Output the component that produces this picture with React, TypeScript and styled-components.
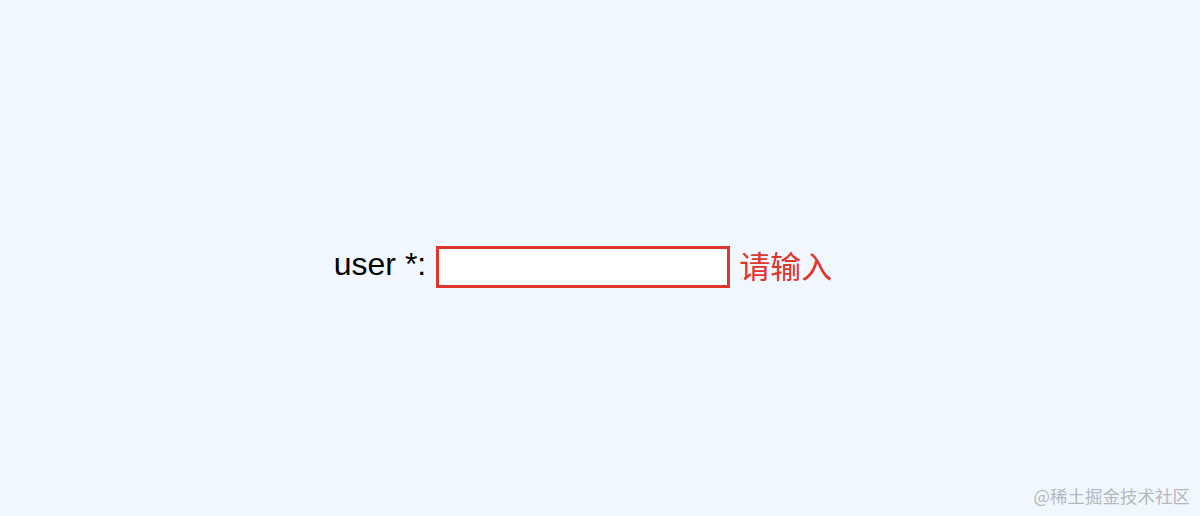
import styled, { createGlobalStyle } from 'styled-components';

const GlobalStyle = createGlobalStyle`
  html, body {
    margin: 0;
    padding: 0;
    background-color: #f1f7fe;
  }
`;

const Page = () => {
  return (
    <>
      <GlobalStyle />
      <Container>
        <FormRow>
          <Label htmlFor="user">user *:</Label>
          <Input id="user" type="text" />
          <ErrorText>请输入</ErrorText>
        </FormRow>
        <Watermark>@稀土掘金技术社区</Watermark>
      </Container>
    </>
  );
};

const Container = styled.div`
  position: relative;
  width: 1200px;
  height: 516px;
  box-sizing: border-box;
  padding: 17px 34px 0 0;
  display: flex;
  justify-content: center;
  align-items: center;
  background-color: #f1f7fe;
  font-family: 'Liberation Sans', 'Noto Sans CJK SC', sans-serif;
`;

const FormRow = styled.div`
  display: flex;
  align-items: center;
`;

const Label = styled.label`
  font-size: 32px;
  color: #000;
  margin-right: 10px;
  position: relative;
  top: -2px;
`;

const Input = styled.input`
  width: 294px;
  height: 42px;
  box-sizing: border-box;
  border: 3px solid #e0352b;
  background-color: #fff;
  outline: none;
  margin: 0;
  padding: 0 6px;
  font-size: 20px;
`;

const ErrorText = styled.span`
  font-size: 31px;
  color: #e0352b;
  margin-left: 9px;
  font-family: 'Noto Sans CJK SC', sans-serif;
  position: relative;
  top: -2px;
`;

const Watermark = styled.div`
  position: absolute;
  right: 10px;
  bottom: 8px;
  font-size: 17.5px;
  color: #b4b8bf;
  font-family: 'Noto Sans CJK SC', sans-serif;
`;

export default Page;
